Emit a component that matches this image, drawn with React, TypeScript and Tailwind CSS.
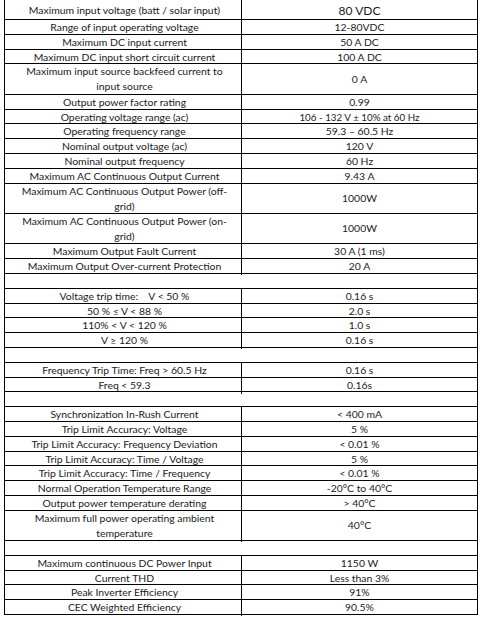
import React from "react"

type Row = {
  left?: string[]
  right?: string
  tall?: boolean
  blank?: boolean
  rightClass?: string
}

const rows: Row[] = [
  { left: ["Range of input operating voltage"], right: "12-80VDC" },
  { left: ["Maximum DC input current"], right: "50 A DC" },
  { left: ["Maximum DC input short circuit current"], right: "100 A DC" },
  { left: ["Maximum input source backfeed current to", "input source"], right: "0 A", tall: true },
  { left: ["Output power factor rating"], right: "0.99" },
  { left: ["Operating voltage range (ac)"], right: "106 - 132 V ± 10% at 60 Hz", rightClass: "text-[9.8px]" },
  { left: ["Operating frequency range"], right: "59.3 – 60.5 Hz" },
  { left: ["Nominal output voltage (ac)"], right: "120 V" },
  { left: ["Nominal output frequency"], right: "60 Hz" },
  { left: ["Maximum AC Continuous Output Current"], right: "9.43 A" },
  { left: ["Maximum AC Continuous Output Power (off-", "grid)"], right: "1000W", tall: true },
  { left: ["Maximum AC Continuous Output Power (on-", "grid)"], right: "1000W", tall: true },
  { left: ["Maximum Output Fault Current"], right: "30 A (1 ms)" },
  { left: ["Maximum Output Over-current Protection"], right: "20 A" },
  { blank: true },
  { left: ["Voltage trip time:    V < 50 %"], right: "0.16 s" },
  { left: ["50 % ≤ V < 88 %"], right: "2.0 s" },
  { left: ["110% < V < 120 %"], right: "1.0 s" },
  { left: ["V ≥ 120 %"], right: "0.16 s" },
  { blank: true },
  { left: ["Frequency Trip Time: Freq > 60.5 Hz"], right: "0.16 s" },
  { left: ["Freq < 59.3"], right: "0.16s" },
  { blank: true },
  { left: ["Synchronization In-Rush Current"], right: "< 400 mA" },
  { left: ["Trip Limit Accuracy: Voltage"], right: "5 %" },
  { left: ["Trip Limit Accuracy: Frequency Deviation"], right: "< 0.01 %" },
  { left: ["Trip Limit Accuracy: Time / Voltage"], right: "5 %" },
  { left: ["Trip Limit Accuracy: Time / Frequency"], right: "< 0.01 %" },
  { left: ["Normal Operation Temperature Range"], right: "-20°C to 40°C" },
  { left: ["Output power temperature derating"], right: "> 40°C" },
  { left: ["Maximum full power operating ambient", "temperature"], right: "40°C", tall: true },
  { blank: true },
  { left: ["Maximum continuous DC Power Input"], right: "1150 W" },
  { left: ["Current THD"], right: "Less than 3%" },
  { left: ["Peak Inverter Efficiency"], right: "91%" },
  { left: ["CEC Weighted Efficiency"], right: "90.5%" },
]

function SpecRow({ row }: { row: Row }) {
  const height = row.tall ? "h-[30.4px]" : "h-[14.8px]"
  if (row.blank) {
    return <div className={`${height} border-b border-black`} />
  }
  return (
    <div className={`${height} grid grid-cols-[237px_1fr] border-b border-black`}>
      <div className="flex flex-col items-center justify-center border-r border-black pb-[1px] pl-[3px] text-center leading-[15px] whitespace-pre">
        {row.left?.map((line) => (
          <span key={line}>{line}</span>
        ))}
      </div>
      <div className={`flex items-center justify-center pb-[1px] leading-[15px] ${row.rightClass ?? ""}`}>{row.right}</div>
    </div>
  )
}

export default function App() {
  return (
    <div className="h-[618px] w-[481px] overflow-hidden bg-white">
      <div
        className="ml-[4px] w-[474px] border-x border-black text-[10.4px] text-[#1a1a1a]"
        style={{ fontFamily: "Lato, 'Noto Sans', sans-serif" }}
      >
        {/* first row is cut off at the top of the shot */}
        <div className="grid h-[20px] grid-cols-[237px_1fr] border-b border-black">
          <div className="flex items-end justify-center border-r border-black pb-[1.5px] pl-[3px] leading-[15px]">
            Maximum input voltage (batt / solar input)
          </div>
          <div className="flex items-end justify-center pb-[1px] text-[12px] leading-[15px]">80 VDC</div>
        </div>
        {rows.map((row, i) => (
          <SpecRow key={i} row={row} />
        ))}
      </div>
    </div>
  )
}
